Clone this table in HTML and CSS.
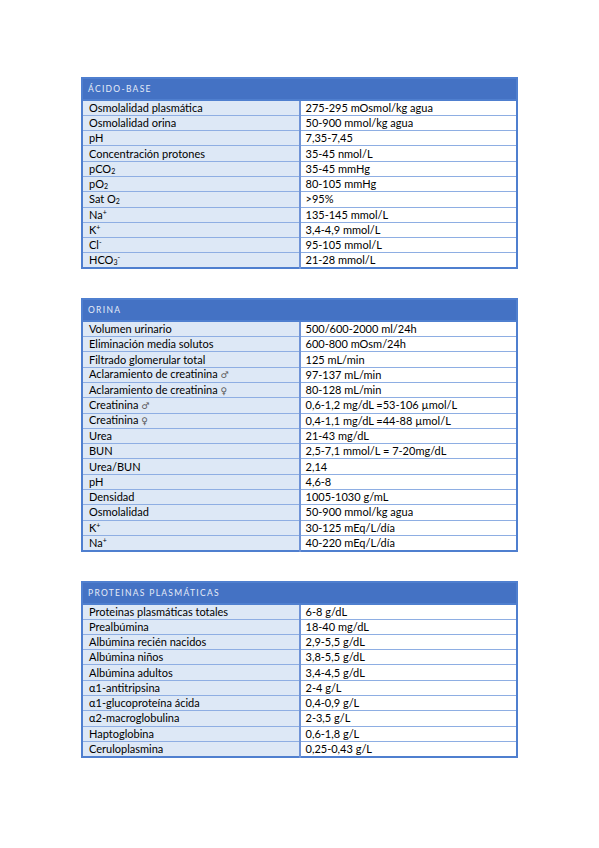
FILE: index.html
```html
<!DOCTYPE html>
<html lang="es">
<head>
<meta charset="utf-8">
<link rel="stylesheet" href="styles.css">
</head>
<body>
<main class="page">
  <table class="ref">
    <thead><tr><th colspan="2">ÁCIDO-BASE</th></tr></thead>
    <tbody>
      <tr><td>Osmolalidad plasmática</td><td>275-295 mOsmol/kg agua</td></tr>
      <tr><td>Osmolalidad orina</td><td>50-900 mmol/kg agua</td></tr>
      <tr><td>pH</td><td>7,35-7,45</td></tr>
      <tr><td>Concentración protones</td><td>35-45 nmol/L</td></tr>
      <tr><td>pCO<sub>2</sub></td><td>35-45 mmHg</td></tr>
      <tr><td>pO<sub>2</sub></td><td>80-105 mmHg</td></tr>
      <tr><td>Sat O<sub>2</sub></td><td>&gt;95%</td></tr>
      <tr><td>Na<sup>+</sup></td><td>135-145 mmol/L</td></tr>
      <tr><td>K<sup>+</sup></td><td>3,4-4,9 mmol/L</td></tr>
      <tr><td>Cl<sup>-</sup></td><td>95-105 mmol/L</td></tr>
      <tr><td>HCO<sub>3</sub><sup>-</sup></td><td>21-28 mmol/L</td></tr>
    </tbody>
  </table>

  <table class="ref">
    <thead><tr><th colspan="2">ORINA</th></tr></thead>
    <tbody>
      <tr><td>Volumen urinario</td><td>500/600-2000 ml/24h</td></tr>
      <tr><td>Eliminación media solutos</td><td>600-800 mOsm/24h</td></tr>
      <tr><td>Filtrado glomerular total</td><td>125 mL/min</td></tr>
      <tr><td>Aclaramiento de creatinina <span class="sex">♂</span></td><td>97-137 mL/min</td></tr>
      <tr><td>Aclaramiento de creatinina <span class="sex">♀</span></td><td>80-128 mL/min</td></tr>
      <tr><td>Creatinina <span class="sex">♂</span></td><td>0,6-1,2 mg/dL =53-106 µmol/L</td></tr>
      <tr><td>Creatinina <span class="sex">♀</span></td><td>0,4-1,1 mg/dL =44-88 µmol/L</td></tr>
      <tr><td>Urea</td><td>21-43 mg/dL</td></tr>
      <tr><td>BUN</td><td>2,5-7,1 mmol/L = 7-20mg/dL</td></tr>
      <tr><td>Urea/BUN</td><td>2,14</td></tr>
      <tr><td>pH</td><td>4,6-8</td></tr>
      <tr><td>Densidad</td><td>1005-1030 g/mL</td></tr>
      <tr><td>Osmolalidad</td><td>50-900 mmol/kg agua</td></tr>
      <tr><td>K<sup>+</sup></td><td>30-125 mEq/L/día</td></tr>
      <tr><td>Na<sup>+</sup></td><td>40-220 mEq/L/día</td></tr>
    </tbody>
  </table>

  <table class="ref">
    <thead><tr><th colspan="2">PROTEINAS PLASMÁTICAS</th></tr></thead>
    <tbody>
      <tr><td>Proteinas plasmáticas totales</td><td>6-8 g/dL</td></tr>
      <tr><td>Prealbúmina</td><td>18-40 mg/dL</td></tr>
      <tr><td>Albúmina recién nacidos</td><td>2,9-5,5 g/dL</td></tr>
      <tr><td>Albúmina niños</td><td>3,8-5,5 g/dL</td></tr>
      <tr><td>Albúmina adultos</td><td>3,4-4,5 g/dL</td></tr>
      <tr><td>α1-antitripsina</td><td>2-4 g/L</td></tr>
      <tr><td>α1-glucoproteína ácida</td><td>0,4-0,9 g/L</td></tr>
      <tr><td>α2-macroglobulina</td><td>2-3,5 g/L</td></tr>
      <tr><td>Haptoglobina</td><td>0,6-1,8 g/L</td></tr>
      <tr><td>Ceruloplasmina</td><td>0,25-0,43 g/L</td></tr>
    </tbody>
  </table>
</main>
</body>
</html>
```

FILE: styles.css
```css
html, body {
  margin: 0;
  padding: 0;
  background: #ffffff;
}

.page {
  padding: 77px 0 0 81px;
  display: flex;
  flex-direction: column;
  gap: 29px;
  font-family: Lato, "Open Sans", "Liberation Sans", sans-serif;
  color: #000000;
}

.ref {
  width: 437px;
  border-collapse: collapse;
  table-layout: fixed;
  border: 2px solid #4f7fcf;
  font-size: 11px;
}

.ref thead tr {
  height: 22px;
}

.ref th {
  background: #4472c4;
  color: #e6ecf8;
  text-align: left;
  font-weight: 400;
  font-size: 8.5px;
  letter-spacing: 1.3px;
  padding: 0 0 0 5px;
  line-height: 12px;
  border-bottom: 2px solid #4f7fcf;
}

.ref tbody tr {
  height: 15.3px;
}

.ref td {
  padding: 0 0 0 5px;
  line-height: 12px;
  border: 1px solid #8eaee3;
  white-space: nowrap;
  overflow: hidden;
}

.ref td:first-child {
  background: #dde8f6;
  padding-left: 6px;
  border-right: 2px solid #6f93d6;
}

.ref td:last-child {
  background: #ffffff;
}

.ref sub, .ref sup {
  font-size: 7px;
  line-height: 0;
}

.ref sub { vertical-align: -1px; }
.ref sup { vertical-align: 4px; }

.sex {
  font-size: 9px;
  color: #555555;
  font-family: "DejaVu Sans", sans-serif;
}
```
